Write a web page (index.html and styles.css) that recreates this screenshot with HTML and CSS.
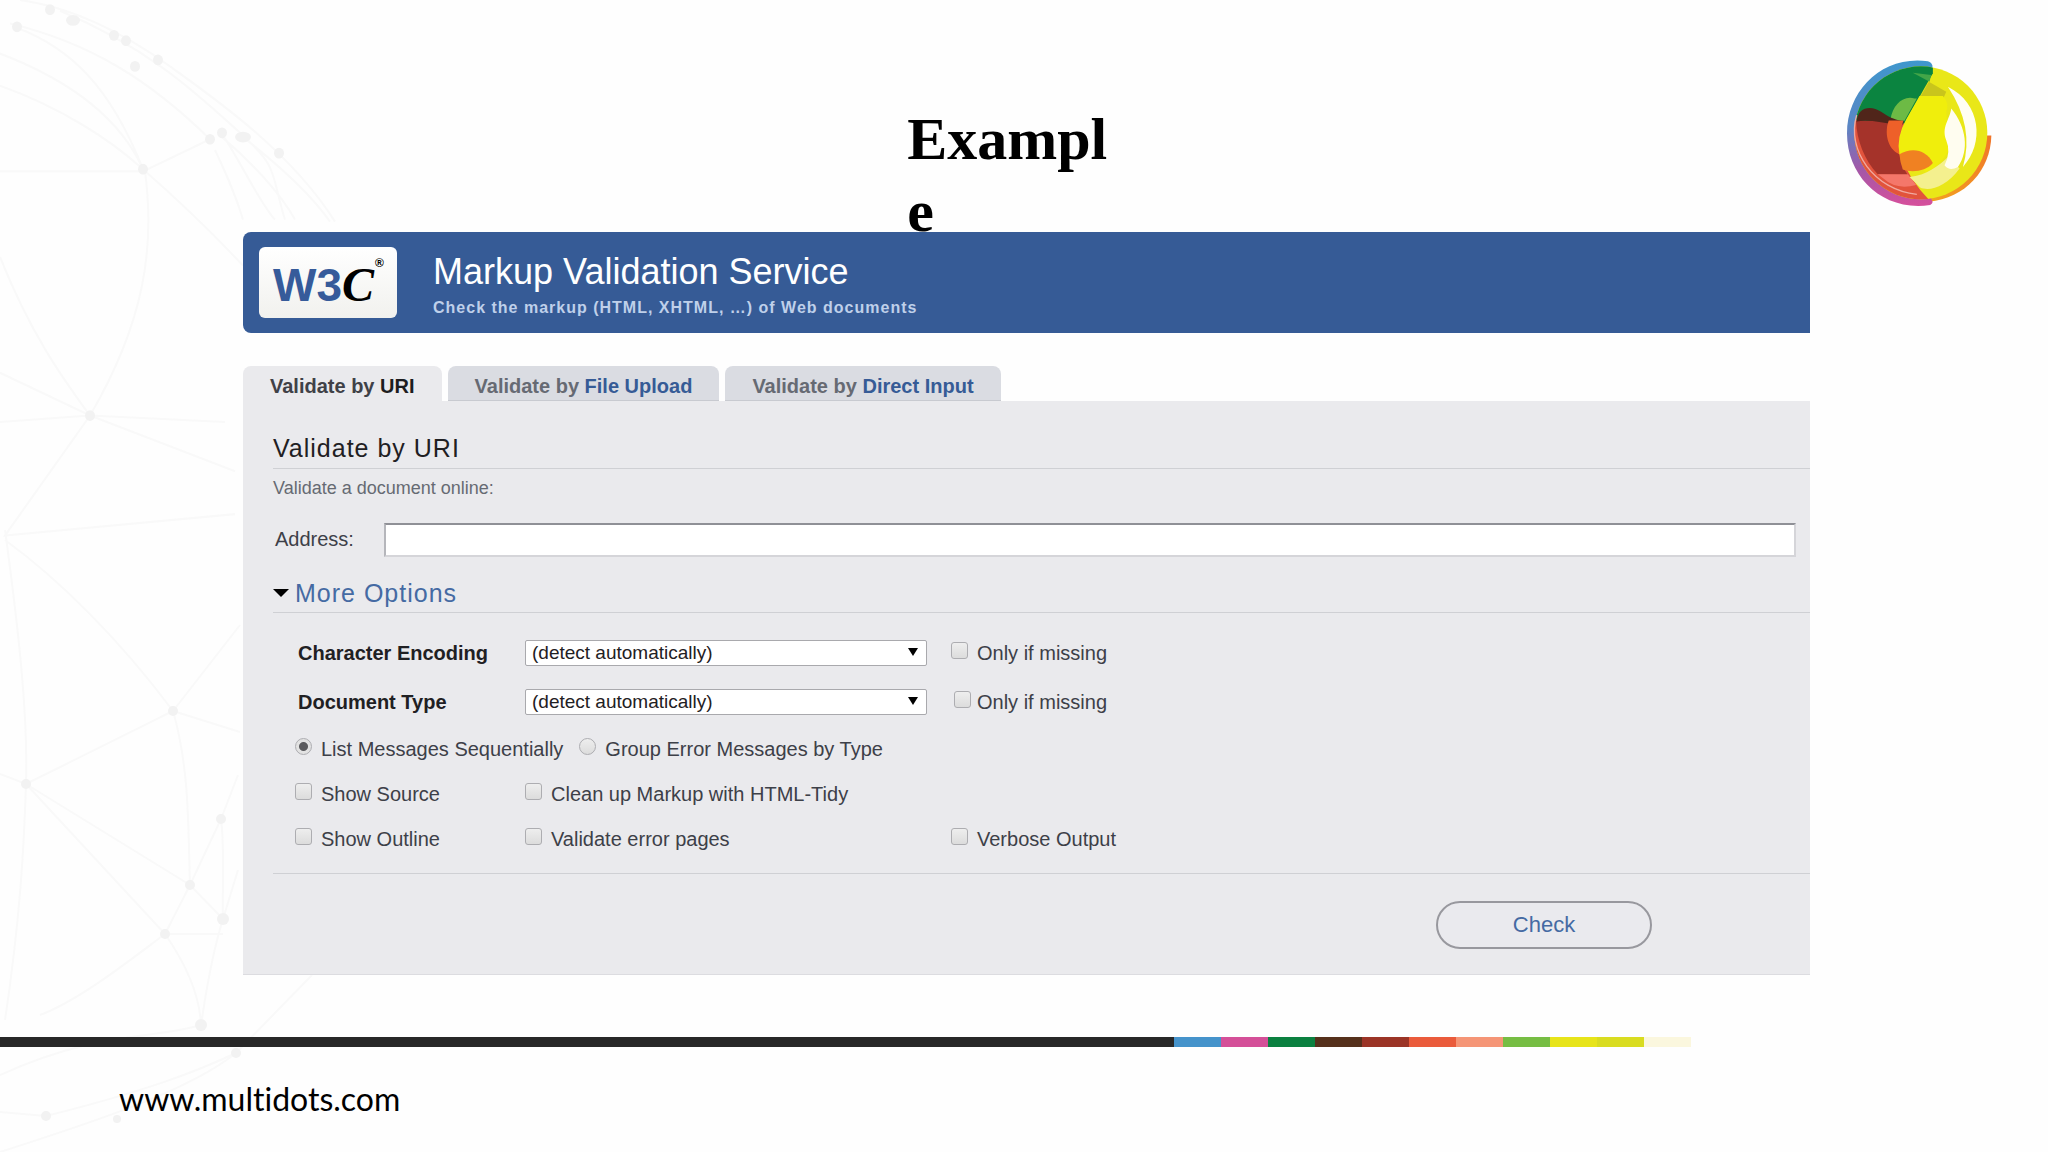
FILE: index.html
```html
<!DOCTYPE html>
<html lang="en">
<head>
<meta charset="utf-8">
<title>Example</title>
<link rel="stylesheet" href="styles.css">
</head>
<body>
<div class="slide">
  <svg class="network" width="340" height="1152" viewBox="0 0 340 1152" aria-hidden="true">
    <g class="threads">
      <path transform="scale(1 1.071)" d="M20 0C80 8 130 35 170 62S290 140 335 207M10 22C90 40 150 75 210 130M60 10C150 45 200 90 240 124S270 160 285 205M17 26C70 45 110 80 143 158M0 50C70 75 120 110 143 158M0 80C60 100 110 130 143 158M0 160H143L210 130M143 158C170 180 210 215 243 248M145 160C155 230 145 300 90 388M0 240C30 310 60 350 90 388M0 348L90 388L235 440M0 394L90 388L225 394M90 388L5 500L235 480M222 125C240 150 260 190 275 205M222 128C250 150 280 180 295 205M243 128C280 155 310 180 330 207M215 140C225 160 235 180 243 205"/>
      <path d="M5 530C20 640 28 720 26 784S20 920 5 1020M5 540C60 580 120 640 173 711M240 625L173 711L26 784L0 774M173 711L240 732M173 711C190 770 188 830 190 885L165 934L26 784L190 885L223 919M238 775L221 819C225 850 222 890 223 919L238 870M190 885L221 819M165 934H223M165 934C130 960 80 1000 40 1015M165 934C190 970 200 1000 201 1025M223 919C210 960 205 1000 201 1025C150 1040 100 1030 0 1075M312 975L236 1053C200 1070 150 1090 46 1116L0 1112M236 1053C190 1090 100 1120 0 1152"/>
    </g>
    <g class="knots">
      <g transform="scale(1 1.071)">
        <circle cx="17" cy="25" r="5"/><circle cx="50" cy="9" r="5"/><ellipse cx="73" cy="19" rx="7" ry="5"/><circle cx="114" cy="33" r="5"/><circle cx="126" cy="38" r="5"/><circle cx="135" cy="62" r="5"/><circle cx="158" cy="56" r="5"/><circle cx="143" cy="158" r="5"/><circle cx="210" cy="130" r="5"/><circle cx="222" cy="124" r="5"/><ellipse cx="243" cy="128" rx="8" ry="5"/><circle cx="279" cy="143" r="5"/><circle cx="90" cy="388" r="5"/>
      </g>
      <circle cx="173" cy="711" r="5"/><circle cx="26" cy="784" r="5"/><circle cx="221" cy="819" r="5"/><circle cx="190" cy="885" r="5"/><circle cx="223" cy="919" r="6"/><circle cx="165" cy="934" r="5"/><circle cx="201" cy="1025" r="6"/><circle cx="236" cy="1053" r="5"/><circle cx="46" cy="1116" r="5"/><circle cx="117" cy="1119" r="4"/>
    </g>
  </svg>

  <header class="masthead">
    <h1 class="slide-title">Example</h1>
    <svg class="orb" viewBox="140 60 440 440" role="img" aria-label="Multidots">
      <defs>
        <linearGradient id="rim" x1="0" y1="0" x2="0" y2="1">
          <stop offset="0" stop-color="#3f97cd"/><stop offset=".45" stop-color="#5a86c4"/><stop offset=".75" stop-color="#a358a8"/><stop offset="1" stop-color="#d64f9b"/>
        </linearGradient>
        <linearGradient id="amber" x1="1" y1="0" x2="0" y2="1">
          <stop offset="0" stop-color="#f0752a"/><stop offset="1" stop-color="#f3a51f"/>
        </linearGradient>
        <clipPath id="ball"><circle cx="364" cy="278" r="199"/></clipPath>
      </defs>
      <path d="M575 286C573 390 497 474 388 484L370 440L540 286Z" fill="url(#amber)"/>
      <path d="M385 64C250 45 143 150 143 280S250 515 392 494Q404 488 396 478L340 90Q402 88 399 78Q397 68 385 64Z" fill="url(#rim)"/>
      <g clip-path="url(#ball)">
        <rect x="160" y="70" width="410" height="420" fill="#e9e718"/>
        <path d="M160 230H320L300 340Q330 420 390 480H160Z" fill="#e2533c"/>
        <path d="M160 70H400V100L315 250L170 240Z" fill="#0b8440"/>
        <path d="M345 175C310 165 280 195 273 238L315 242L352 175Z" fill="#6dba45"/>
        <path d="M170 242H270C255 270 265 320 300 342Q305 375 325 404L235 402C195 360 172 300 170 242Z" fill="#a5332a"/>
        <path d="M172 244C175 200 215 195 245 215S290 240 314 244L306 258Q210 235 172 244Z" fill="#50251a"/>
        <path d="M235 402H325L350 434Q290 450 252 415Z" fill="#f4776a"/>
        <path d="M268 241H312Q294 290 300 342C262 325 255 275 268 241Z" fill="#ee6029"/>
        <path d="M388 125L440 155L430 178L364 168Z" fill="#c9c51c"/>
        <path d="M360 168H430Q450 190 440 215L448 330Q420 380 380 395L300 342Q290 290 320 238Z" fill="#f0ee0c"/>
        <path d="M300 342C340 320 380 330 400 368C380 392 340 398 310 388Q302 368 300 342Z" fill="#f08122"/>
        <path d="M330 410C380 405 420 375 445 350L480 385C440 440 390 455 362 442Z" fill="#f4f08e"/>
        <path d="M455 205C450 240 425 260 440 300Q455 335 435 375Q450 395 475 380C510 330 500 260 455 205Z" fill="#fffdf0"/>
        <path d="M445 140C545 190 555 310 490 380Q525 260 445 140Z" fill="#fffef2"/>
        <path d="M340 98L395 105L390 125Z" fill="#43a548"/>
      </g>
      <path d="M172 225C140 330 225 450 352 462" fill="none" stroke="#f0a9a0" stroke-width="4"/>
    </svg>
  </header>

  <main class="validator">
    <div class="banner">
      <a class="w3c" href="#" aria-label="W3C">
        <svg class="w3c-mark" viewBox="0 0 138 71" aria-hidden="true">
          <text class="w3c-blue" x="14" y="54">W3</text>
          <text class="w3c-black" x="83" y="54">C</text>
          <text class="w3c-reg" x="116" y="20">®</text>
        </svg>
      </a>
      <div class="banner-text">
        <h2 class="service">Markup Validation Service</h2>
        <p class="tagline">Check the markup (HTML, XHTML, …) of Web documents</p>
      </div>
    </div>

    <nav class="tabs">
      <a class="tab tab-current" href="#uri">Validate by <span class="tab-key">URI</span></a>
      <a class="tab" href="#upload">Validate by <span class="tab-key">File Upload</span></a>
      <a class="tab" href="#input">Validate by <span class="tab-key">Direct Input</span></a>
    </nav>

    <form class="panel" id="uri">
      <h3 class="heading">Validate by URI</h3>
      <p class="hint">Validate a document online:</p>
      <div class="address">
        <label class="address-label" for="address">Address:</label>
        <input class="address-box" id="address" type="text">
      </div>
      <details class="more" open>
        <summary class="more-title">More Options</summary>
        <div class="options">
          <div class="row row-tall">
            <label class="name" for="charset">Character Encoding</label>
            <span class="picker"><select class="picker-box" id="charset"><option>(detect automatically)</option></select></span>
            <label class="tick"><input class="box" type="checkbox">Only if missing</label>
          </div>
          <div class="row row-tall">
            <label class="name" for="doctype">Document Type</label>
            <span class="picker"><select class="picker-box" id="doctype"><option>(detect automatically)</option></select></span>
            <label class="tick tick-close"><input class="box" type="checkbox">Only if missing</label>
          </div>
          <div class="radios">
            <label class="tick"><input class="box box-round" type="radio" name="group" checked>List Messages Sequentially</label>
            <label class="tick"><input class="box box-round" type="radio" name="group">Group Error Messages by Type</label>
          </div>
          <div class="row">
            <label class="tick"><input class="box" type="checkbox">Show Source</label>
            <label class="tick"><input class="box" type="checkbox">Clean up Markup with HTML-Tidy</label>
          </div>
          <div class="row">
            <label class="tick"><input class="box" type="checkbox">Show Outline</label>
            <label class="tick"><input class="box" type="checkbox">Validate error pages</label>
            <label class="tick"><input class="box" type="checkbox">Verbose Output</label>
          </div>
        </div>
      </details>
      <div class="actions"><button class="check" type="button">Check</button></div>
    </form>
  </main>

  <div class="stripe">
    <i class="ink"></i><i class="c1"></i><i class="c2"></i><i class="c3"></i><i class="c4"></i><i class="c5"></i><i class="c6"></i><i class="c7"></i><i class="c8"></i><i class="c9"></i><i class="c10"></i><i class="c11"></i><i class="rest"></i>
  </div>
  <footer class="footer"><a class="site" href="#">www.multidots.com</a></footer>
</div>
</body>
</html>
```

FILE: styles.css
```css
* { box-sizing: border-box; }
body {
  margin: 0;
  background: #fefefe;
  color: #3d4048;
  font: 20px/24px "Liberation Sans", Arial, sans-serif;
}
h1, h2, h3, p { margin: 0; font-weight: normal; }
a { text-decoration: none; }

.slide { position: relative; min-height: 100vh; overflow: hidden; }
.network { position: absolute; left: 0; top: 0; }
.threads { fill: none; stroke: #f9f9f9; stroke-width: 2; }
.knots { fill: #f2f2f2; }

.masthead { position: relative; display: flex; align-items: flex-start; padding: 60px 55px 0 44.3%; }
.slide-title {
  width: 208px;
  margin-top: 43px;
  color: #000;
  font: bold 60px/72px "Liberation Serif", serif;
  overflow-wrap: anywhere;
}
.orb { width: 147px; height: 147px; margin-left: auto; }

.validator { position: relative; margin: -15px 238px 62px 243px; }
.banner {
  display: flex;
  align-items: center;
  gap: 36px;
  min-height: 101px;
  padding: 15px 16px;
  border-radius: 8px 0 0 8px;
  background: #365b96;
}
.w3c {
  width: 138px;
  height: 71px;
  border-radius: 6px;
  background: linear-gradient(#fff, #f1f1ee);
}
.w3c-mark { display: block; width: 100%; height: 100%; }
.w3c-blue { fill: #365b9a; font: bold 46px "Liberation Sans", sans-serif; }
.w3c-black { fill: #000; font: italic bold 48px "Liberation Serif", serif; }
.w3c-reg { fill: #000; font: bold 12px "Liberation Sans", sans-serif; }
.banner-text { padding-top: 3px; }
.service { color: #fff; font-size: 36px; line-height: 44px; }
.tagline { margin-top: 4px; color: #bfd0ea; font-size: 16px; font-weight: bold; line-height: 20px; letter-spacing: 1px; }

.tabs { display: flex; gap: 6px; margin-top: 33px; }
.tab {
  padding: 8px 27px 2px;
  border-bottom: 1px solid #c8cad0;
  border-radius: 8px 8px 0 0;
  background: #dadce2;
  color: #666a73;
  font-weight: bold;
}
.tab-key { color: #365b96; }
.tab-current { border-color: #eaeaed; background: #eaeaed; color: #3f4147; }
.tab-current .tab-key { color: #1d1d20; }

.panel { padding: 31px 0 25px 30px; border-bottom: 1px solid #dcdce0; background: #eaeaed; }
.heading, .more-title { border-bottom: 1px solid #cfd0d4; font-size: 25px; line-height: 32px; letter-spacing: 1px; }
.heading { padding-bottom: 4px; color: #1f2023; }
.hint { margin-top: 7px; color: #666a73; font-size: 18px; }
.address { display: flex; align-items: center; margin: 23px 14px 20px 2px; }
.address-label { width: 109px; padding-bottom: 2px; }
.address-box {
  flex: 1;
  height: 34px;
  padding: 2px 6px;
  border: 2px solid #d5d5d9;
  border-top-color: #8f9096;
  border-left-color: #b5b6bb;
  background: #fff;
  font: inherit;
}
.more-title {
  display: flex;
  align-items: center;
  gap: 6px;
  padding-bottom: 3px;
  color: #456aa3;
  list-style: none;
}
.more-title::before {
  content: "";
  border: 8px solid transparent;
  border-top-color: #000;
  border-bottom-width: 0;
}
.options { padding: 15px 0 12px 22px; border-bottom: 1px solid #cfd0d4; }
.row { display: grid; grid-template-columns: 230px 426px 1fr; align-items: center; min-height: 45px; }
.row-tall { min-height: 49px; }
.radios { display: flex; align-items: center; gap: 16px; min-height: 45px; }
.name { padding-left: 3px; color: #1f2023; font-weight: bold; }
.picker { position: relative; width: 402px; }
.picker::after {
  content: "";
  position: absolute;
  right: 9px;
  top: 8px;
  border: 5px solid transparent;
  border-top: 8px solid #000;
  border-bottom-width: 0;
}
.picker-box {
  display: block;
  width: 100%;
  height: 26px;
  padding: 0 6px;
  appearance: none;
  border: 1px solid #a9a9ad;
  border-radius: 2px;
  background: #fff;
  color: #1f2023;
  font: 19px/24px "Liberation Sans", Arial, sans-serif;
}
.tick { display: flex; align-items: center; gap: 9px; }
.tick-close { gap: 6px; padding-left: 3px; }
.box {
  flex: none;
  width: 17px;
  height: 17px;
  margin: 0 0 5px;
  appearance: none;
  border: 1px solid #adadb1;
  border-radius: 3px;
  background: linear-gradient(#eee, #dcdcdc);
}
.box-round { border-radius: 50%; }
.box-round:checked { background: radial-gradient(circle, #5b5b5e 4px, #e2e2e2 5px); }
.actions { display: flex; justify-content: flex-end; padding: 27px 158px 0 0; }
.check {
  width: 216px;
  height: 48px;
  border: 2px solid #98989e;
  border-radius: 24px;
  background: #eaeaee;
  color: #456aa3;
  font: 22px/28px "Liberation Sans", Arial, sans-serif;
}

.stripe { position: relative; display: flex; height: 10px; }
.stripe i { flex: 47 0 0; }
.stripe .ink { flex-grow: 1174; background: #282828; }
.stripe .rest { flex-grow: 357; }
.c1 { background: #4593cb; }
.c2 { background: #d44f98; }
.c3 { background: #0b8040; }
.c4 { background: #55301c; }
.c5 { background: #9b3426; }
.c6 { background: #ea5b3b; }
.c7 { background: #f59576; }
.c8 { background: #76bd43; }
.c9 { background: #e7e41a; }
.c10 { background: #d9dc20; }
.c11 { background: #fbf7de; }
.footer { position: relative; padding: 32px 119px 33px; }
.site { color: #000; font: 32px/40px Lato, sans-serif; font-variant-ligatures: none; }
```
